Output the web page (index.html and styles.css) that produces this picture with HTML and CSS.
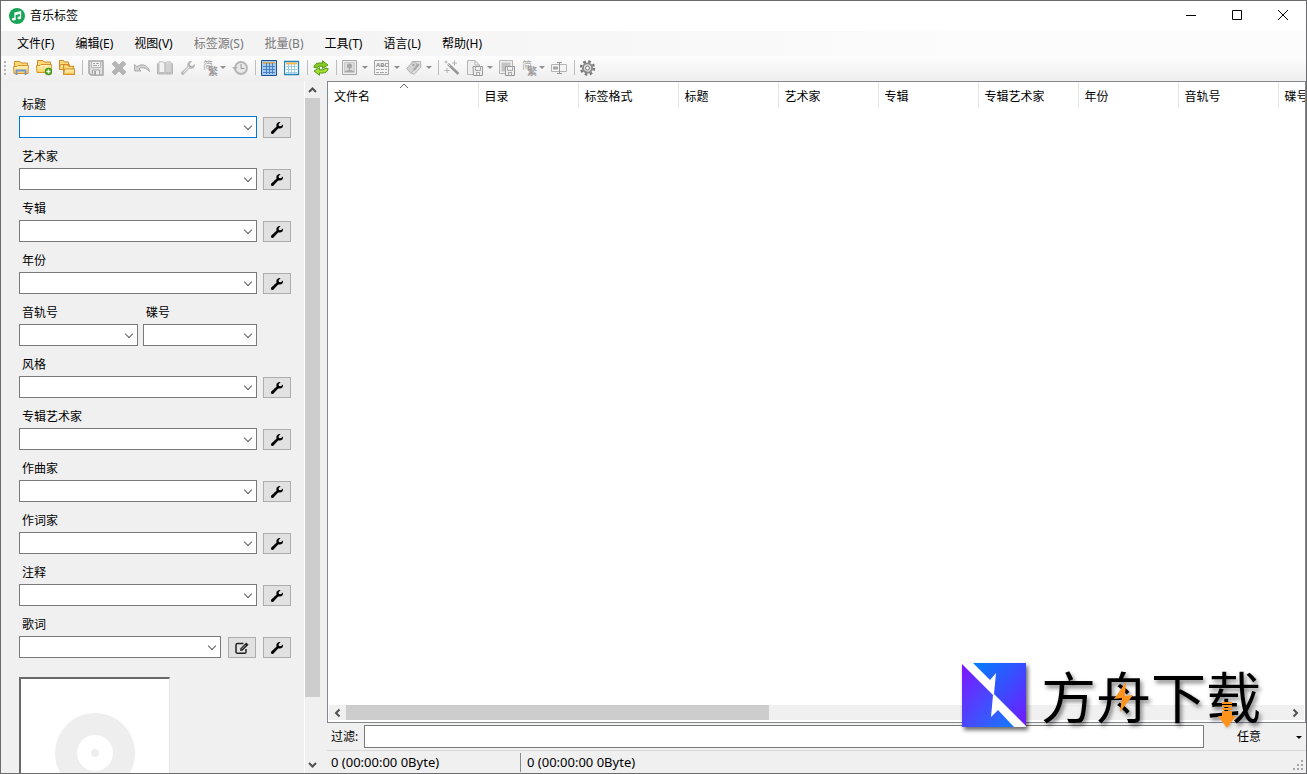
FILE: index.html
```html
<!DOCTYPE html>
<html lang="zh-CN">
<head>
<meta charset="utf-8">
<title>音乐标签</title>
<link rel="stylesheet" href="styles.css">
</head>
<body>
<svg class="defs" aria-hidden="true">
  <defs>
    <linearGradient id="gold" x1="0" y1="0" x2="0" y2="1"><stop offset="0" stop-color="#fff3c0"/><stop offset="1" stop-color="#fbcf5e"/></linearGradient>
    <symbol id="wrench" viewBox="0 0 14 14"><path d="M13 3.4 10.8 5.2 8.9 4.9 8.6 3.2 10.6 1.1C8.5.5 6.5 1.9 6.4 4.1L6.6 5.6 1.3 10.6C.1 12 1.8 13.8 3.3 12.7L8.2 7.4C11.500 8.300 13.500 6 13 3.400Z" fill="currentColor"/></symbol>
    <symbol id="folder" viewBox="0 0 16 16"><path d="M1.500 1.500H7L8 3H14.500V13.500H1.500Z" fill="#fbd977" stroke="#cf8a2a"/><path d="M.5 6.500H4L5 5.500H15.500L15 13.500H1Z" fill="url(#gold)" stroke="#d6922f"/></symbol>
    <symbol id="folder-small" viewBox="0 0 11 10"><path d="M.5 9.500V.5H4.500L5.500 2H9.500V9.500Z" fill="#fbd977" stroke="#cf8a2a"/><path d="M.5 9.500 1.500 4.500H10.500V9.500Z" fill="url(#gold)" stroke="#d6922f"/></symbol>
    <symbol id="convert" viewBox="0 0 16 16"><text x="0" y="9" font-size="10" fill="#999">简</text><text x="5" y="15" font-size="10" font-weight="700" fill="#8c8c8c">繁</text></symbol>
    <symbol id="floppy" viewBox="0 0 16 16"><path d="M1 1H15V15H3L1 13Z" fill="#dcdcdc" stroke="#999" stroke-width="1.500"/><path d="M3.500 1.500H12.500V7.500H3.500Z" fill="#f4f4f4" stroke="#aaa"/><path d="M5 3.500H7M8 3.500H11M5 5.500H9M10 5.500H11" stroke="#999"/><path d="M4.500 10H11.500V15H4.500Z" fill="#eee" stroke="#999"/><path d="M6 11H8V15H6Z" fill="#999"/></symbol>
  </defs>
</svg>
<div class="window">
  <header class="titlebar">
    <svg class="app-icon" viewBox="0 0 16 16"><circle cx="8" cy="8" r="8" fill="#18a558"/><path d="M6 11V5L11.500 3.700V9.700M6 6.500 11.500 5.200" fill="none" stroke="#fff" stroke-width="1.300"/><ellipse cx="4.800" cy="11.200" rx="1.800" ry="1.400" fill="#fff"/><ellipse cx="10.300" cy="9.900" rx="1.800" ry="1.400" fill="#fff"/></svg>
    <h1 class="app-name">音乐标签</h1>
    <button class="caption" aria-label="最小化"><svg viewBox="0 0 12 12"><path d="M1 5.500H11" stroke="#000"/></svg></button>
    <button class="caption" aria-label="最大化"><svg viewBox="0 0 12 12"><path d="M1.500.5H10.500V9.500H1.500Z" fill="none" stroke="#000"/></svg></button>
    <button class="caption" aria-label="关闭"><svg viewBox="0 0 12 12"><path d="M1 0 11 10M11 0 1 10" stroke="#000"/></svg></button>
  </header>
  <nav class="menubar">
    <button>文件(F)</button><button>编辑(E)</button><button>视图(V)</button><button disabled>标签源(S)</button><button disabled>批量(B)</button><button>工具(T)</button><button>语言(L)</button><button>帮助(H)</button>
  </nav>
  <div class="toolbar">
    <span class="grip"></span>
    <button class="tool" aria-label="打开目录"><svg viewBox="0 0 16 16"><use href="#folder"/><path d="M3.500 15V10.500H12.500V15" fill="none" stroke="#7396cb" stroke-width="1.800"/></svg></button>
    <button class="tool" aria-label="添加目录"><svg viewBox="0 0 16 16"><use href="#folder" y="-1" width="16" height="16"/><circle cx="12.500" cy="11.500" r="3.500" fill="#48a51b" stroke="#30840b" stroke-width=".6"/><path d="M12.500 9.500V13.500M10.500 11.500H14.500" stroke="#fff" stroke-width="1.300"/></svg></button>
    <button class="tool" aria-label="打开文件"><svg viewBox="0 0 16 16"><use href="#folder-small" width="11" height="10"/><use href="#folder-small" x="4" y="4" width="12" height="11"/></svg></button>
    <span class="divider"></span>
    <button class="tool" disabled aria-label="保存"><svg viewBox="0 0 16 16"><use href="#floppy"/></svg></button>
    <button class="tool" disabled aria-label="删除"><svg viewBox="0 0 16 16"><path d="M4 1 8 5 12 1 15 4 11 8 15 12 12 15 8 11 4 15 1 12 5 8 1 4Z" fill="#aaa" stroke="#999" stroke-width=".6"/></svg></button>
    <button class="tool" disabled aria-label="撤销"><svg viewBox="0 0 16 16"><path d="M.5 4.500V11H7L5 8.800C8 6.800 11.500 7.500 15.500 11.500 14.500 5.500 8 2.800 2.900 6.600Z" fill="#ccc" stroke="#999" stroke-width=".9"/></svg></button>
    <button class="tool" disabled aria-label="书籍"><svg viewBox="0 0 16 16"><path d="M.5 3.500V14H15.500V3.500" fill="#c4c4c4" stroke="#aaa"/><path d="M2 2Q6 1 8 3Q10 1 14 2V12.500H9L8 13.500 7 12.500H2Z" fill="#f2f2f2" stroke="#b4b4b4"/><path d="M8.500 3.500Q11 1.500 14 2V12H8.500Z" fill="#ccc"/><path d="M8 3V13" stroke="#999"/></svg></button>
    <button class="tool" disabled aria-label="工具"><svg class="soft-wrench" viewBox="0 0 14 14"><use href="#wrench"/><path d="M3 11 8 6" stroke="#eee"/></svg></button>
    <button class="tool menu" disabled aria-label="简繁转换"><svg viewBox="0 0 16 16"><use href="#convert"/></svg></button>
    <button class="tool" disabled aria-label="历史"><svg viewBox="0 0 16 16"><circle cx="9" cy="8" r="6" fill="#e5e5e5" stroke="#aaa" stroke-width="1.800"/><path d="M9 4V8.500H12.500" fill="none" stroke="#888"/><path d="M0 7H6L3 10.500Z" fill="#aaa"/></svg></button>
    <span class="divider"></span>
    <button class="tool" aria-label="标签面板"><svg viewBox="0 0 16 16"><path d="M.5.5H15.500V15.500H.5Z" fill="#a5cbf0" stroke="#1b5391"/><path d="M2 3H14" stroke="#d1aa69" stroke-width="2"/><path d="M2 6.500H14M2 9.500H14M2 12.500H14M5.500 3V14M8.500 3V14M11.500 3V14" stroke="#4682bf"/></svg></button>
    <button class="tool" aria-label="列表面板"><svg viewBox="0 0 16 16"><path d="M.5 1.500H14.500V14.500H.5Z" fill="#fff" stroke="#1d83b8" stroke-width="1.300"/><path d="M2 3.500H13" stroke="#f4b648" stroke-width="2"/><path d="M2 6.500H13M2 9.500H13M2 12.500H13M4.500 4V14M7.500 4V14M10.500 4V14" stroke="#9ccde4"/></svg></button>
    <span class="divider"></span>
    <button class="tool" aria-label="刷新"><svg viewBox="0 0 16 16"><path d="M.8 7.300Q2 2.500 7 3H9.500V.7L15 5 9.500 8.500V6.300H6Q4.500 6.300 4 8Z" fill="#86ca24" stroke="#4b9411" stroke-width=".9"/><path d="M15.200 8.700Q14 13.500 9 13H6.500V15.300L1 11 6.500 7.500V9.700H10Q11.500 9.700 12 8Z" fill="#a3dc35" stroke="#4b9411" stroke-width=".9"/></svg></button>
    <span class="divider"></span>
    <button class="tool wide menu" disabled aria-label="封面"><svg viewBox="0 0 16 16"><path d="M.5.5H14.500V14.500H.5Z" fill="#eee" stroke="#999"/><path d="M2.500 2.500H12.500V12.500H2.500Z" fill="#d4d4d4" stroke="#c4c4c4"/><circle cx="7.500" cy="6" r="2.500" fill="#999"/><path d="M7 7H8V10L12 11V12H3V11L7 10Z" fill="#999"/></svg></button>
    <button class="tool wide menu" disabled aria-label="文本"><svg viewBox="0 0 16 16"><path d="M.5.5H14.500V14.500H.5Z" fill="#f4f4f4" stroke="#999"/><text x="2" y="7" font-size="6" font-weight="700" fill="#777">ABC</text><path d="M2 9.500H6M7 9.500H10M11 9.500H13M2 12.500H5M6 12.500H10M11 12.500H13" stroke="#999"/></svg></button>
    <button class="tool wide menu" disabled aria-label="标签"><svg viewBox="0 0 16 16"><path d="M6 1.500H14.500L15 7 8 14.500 3 11Z" fill="#ddd" stroke="#aaa"/><path d="M.5 8.500 7 1.500 10.500 3V7L5 13.500Z" fill="#ccc" stroke="#aaa"/><path d="M8 10 13 4" stroke="#999" stroke-width="2"/><circle cx="7.500" cy="5" r="1" fill="#888"/></svg></button>
    <span class="divider"></span>
    <button class="tool" disabled aria-label="自动"><svg viewBox="0 0 16 16"><path d="M4 4 14.500 14" stroke="#888" stroke-width="2.500"/><path d="M4 4 6 6" stroke="#ddd"/><path d="M2 .5V3.500M.5 2H3.500M10.500.5V5.500M8 3H13M3 8V13M.5 10.500H5.500" stroke="#aaa"/></svg></button>
    <button class="tool wide menu" disabled aria-label="另存"><svg viewBox="0 0 16 16"><path d="M.5.500H8L12.500 5V14.500H.5Z" fill="#eee" stroke="#aaa"/><path d="M8 .5V5H12" fill="none" stroke="#aaa"/><path d="M6 6.500H15.500V15.500H6.500Z" fill="#eee" stroke="#888"/><path d="M8.500 6V10.500H13.500V6M9.500 15V12.500H12.500V15" fill="none" stroke="#999"/></svg></button>
    <button class="tool" disabled aria-label="导出封面"><svg viewBox="0 0 16 16"><path d="M.5.500H13.500V13.500H.5Z" fill="#eee" stroke="#aaa"/><path d="M2.500 2.500H11.500V11.500H2.500Z" fill="#bbb"/><path d="M6.500 6.500H15.500V15.500H6.500Z" fill="#eee" stroke="#888"/><path d="M8.500 6V10.500H13.500V6M9.500 15V12.500H12.500V15" fill="none" stroke="#999"/></svg></button>
    <button class="tool menu" disabled aria-label="批量简繁转换"><svg viewBox="0 0 16 16"><use href="#convert"/></svg></button>
    <button class="tool" disabled aria-label="重命名"><svg viewBox="0 0 16 16"><path d="M.5 4.500H15.500V11.500H.5Z" fill="#f4f4f4" stroke="#aaa"/><path d="M2 6.500H7V9.500H2Z" fill="#999"/><path d="M6 2.500H11M6 13.500H11M8.500 3V13" stroke="#888"/></svg></button>
    <span class="divider"></span>
    <button class="tool" aria-label="设置"><svg viewBox="0 0 16 16"><circle cx="7.500" cy="8" r="6.500" fill="none" stroke="#777" stroke-width="2.400" stroke-dasharray="2.550 2.550"/><circle cx="7.500" cy="8" r="4.600" fill="#ddd" stroke="#888" stroke-width="1.800"/><circle cx="7.500" cy="8" r="2" fill="#fff" stroke="#777"/></svg></button>
  </div>
  <main class="main">
    <aside class="side">
      <form class="fields">
        <div class="field"><label for="f1">标题</label><span class="combo active"><select id="f1"></select></span><button type="button" class="edit" aria-label="编辑标题"><svg><use href="#wrench"/></svg></button></div>
        <div class="field"><label for="f2">艺术家</label><span class="combo"><select id="f2"></select></span><button type="button" class="edit" aria-label="编辑艺术家"><svg><use href="#wrench"/></svg></button></div>
        <div class="field"><label for="f3">专辑</label><span class="combo"><select id="f3"></select></span><button type="button" class="edit" aria-label="编辑专辑"><svg><use href="#wrench"/></svg></button></div>
        <div class="field"><label for="f4">年份</label><span class="combo"><select id="f4"></select></span><button type="button" class="edit" aria-label="编辑年份"><svg><use href="#wrench"/></svg></button></div>
        <div class="field pair"><div><label for="f5">音轨号</label><span class="combo"><select id="f5"></select></span></div><div><label for="f6">碟号</label><span class="combo"><select id="f6"></select></span></div></div>
        <div class="field"><label for="f7">风格</label><span class="combo"><select id="f7"></select></span><button type="button" class="edit" aria-label="编辑风格"><svg><use href="#wrench"/></svg></button></div>
        <div class="field"><label for="f8">专辑艺术家</label><span class="combo"><select id="f8"></select></span><button type="button" class="edit" aria-label="编辑专辑艺术家"><svg><use href="#wrench"/></svg></button></div>
        <div class="field"><label for="f9">作曲家</label><span class="combo"><select id="f9"></select></span><button type="button" class="edit" aria-label="编辑作曲家"><svg><use href="#wrench"/></svg></button></div>
        <div class="field"><label for="f10">作词家</label><span class="combo"><select id="f10"></select></span><button type="button" class="edit" aria-label="编辑作词家"><svg><use href="#wrench"/></svg></button></div>
        <div class="field"><label for="f11">注释</label><span class="combo"><select id="f11"></select></span><button type="button" class="edit" aria-label="编辑注释"><svg><use href="#wrench"/></svg></button></div>
        <div class="field lyrics"><label for="f12">歌词</label><span class="combo"><select id="f12"></select></span><button type="button" class="edit" aria-label="歌词编辑器"><svg viewBox="0 0 14 14"><path d="M11 8V11Q11 12.300 9.700 12.300H2.500Q1 12.300 1 11V4Q1 2.500 2.500 2.500H8.500" fill="none" stroke="#222" stroke-width="1.500"/><path d="M5 10 5.500 7.300 11.300 1.500 13.500 3.700 7.700 9.500Z" fill="#222"/><path d="M6.500 8.200 10.500 4.200" stroke="#ddd" stroke-width=".7"/></svg></button><button type="button" class="edit" aria-label="编辑歌词"><svg><use href="#wrench"/></svg></button></div>
      </form>
      <div class="cover"><svg viewBox="0 0 80 80"><circle cx="40" cy="40" r="40" fill="#eee"/><circle cx="40" cy="40" r="18" fill="#fff"/><circle cx="40" cy="40" r="4" fill="#eee"/></svg></div>
    </aside>
    <div class="vscroll"><svg class="arrow" viewBox="0 0 15 17"><path d="M4 11 7.500 7.500 11 11" fill="none" stroke="#505050" stroke-width="2"/></svg><span class="vtrack"><span class="vthumb"></span></span><svg class="arrow" viewBox="0 0 15 17"><path d="M4 7 7.500 10.500 11 7" fill="none" stroke="#505050" stroke-width="2"/></svg></div>
    <section class="content">
      <div class="list">
        <div class="list-view">
          <table>
            <thead><tr><th class="first">文件名<svg class="sort" viewBox="0 0 10 6"><path d="M1 5 5 1 9 5" fill="none" stroke="#666"/></svg></th><th>目录</th><th>标签格式</th><th>标题</th><th>艺术家</th><th>专辑</th><th>专辑艺术家</th><th>年份</th><th>音轨号</th><th>碟号</th></tr></thead>
          </table>
        </div>
        <div class="hscroll"><svg class="arrow" viewBox="0 0 16 16"><path d="M10 4.500 6.500 8 10 11.500" fill="none" stroke="#505050" stroke-width="2"/></svg><span class="htrack"><span class="hthumb"></span></span><svg class="arrow" viewBox="0 0 16 16"><path d="M6 4.500 9.500 8 6 11.500" fill="none" stroke="#505050" stroke-width="2"/></svg></div>
      </div>
      <div class="filter"><label for="filter">过滤:</label><input id="filter" type="text"><span class="scope"><select aria-label="过滤范围"><option>任意</option></select></span></div>
      <footer class="status"><span class="cell">0 (00:00:00 0Byte)</span><span>0 (00:00:00 0Byte)</span><svg class="size-grip" viewBox="0 0 12 12"><path d="M8 0h2v2H8zM4 4h2v2H4zM8 4h2v2H8zM0 8h2v2H0zM4 8h2v2H4zM8 8h2v2H8z" fill="#a5a5a5"/></svg></footer>
    </section>
  </main>
</div>
<svg class="brand" viewBox="0 0 310 78" role="img" aria-label="方舟下载">
  <defs>
    <linearGradient id="upper" x1="0" y1="0" x2="1" y2="1"><stop offset="0" stop-color="#0080ff"/><stop offset="1" stop-color="#7418ff"/></linearGradient>
    <linearGradient id="lower" x1="0" y1="0" x2="1" y2="1"><stop offset="0" stop-color="#8014ff"/><stop offset="1" stop-color="#147aff"/></linearGradient>
  </defs>
  <g transform="translate(2 3)"><g class="shade"><path d="M0 0H64V64H0Z" fill="#fff"/><path d="M11 0H64V63L32 31 34 10 28 17Z" fill="url(#upper)"/><path d="M0 1 31 32 29 54 36 47 52 64H0Z" fill="url(#lower)"/></g></g>
  <text class="brand-text" x="81" y="58">方舟下载</text>
  <path d="M166 22 154 39 162 38 160 52 173 35 165 36Z" fill="#ff931e"/>
  <path d="M262 42H272V44H262ZM262 45H272V47H262ZM262 48H272V50H262ZM262 51H272V56H276L267 68 258 56H262Z" fill="#ff931e"/>
</svg>
</body>
</html>
```
FILE: styles.css
```css
* { box-sizing: border-box; }
body {
  margin: 0;
  font: 12px/16px "Noto Sans", "Noto Sans CJK SC", sans-serif;
  color: #000;
  background: #f0f0f0;
}
button, select, input { font: inherit; color: inherit; margin: 0; }
button { border: 0; padding: 0; background: none; }
svg { display: block; }
.defs { position: absolute; width: 0; height: 0; }

.window {
  display: flex;
  flex-direction: column;
  height: 100vh;
  border: 1px solid #6b6b6d;
  overflow: hidden;
}
.titlebar {
  display: flex;
  align-items: center;
  flex: 0 0 30px;
  padding-left: 8px;
  background: #fff;
}
.app-icon { width: 16px; height: 16px; }
.app-name { flex: 1; margin: 0 0 0 5px; font-size: 12px; font-weight: 400; }
.caption { display: grid; place-items: center; width: 46px; height: 30px; }
.caption svg { width: 12px; height: 12px; }

.menubar {
  display: flex;
  flex: 0 0 25px;
  gap: 21px;
  padding-left: 16px;
  background: linear-gradient(90deg, #f0f0f0, #fcfcfc 75%);
}
.menubar button:disabled { color: #777; }

.toolbar {
  display: flex;
  align-items: center;
  flex: 0 0 25px;
  padding-bottom: 2px;
  background: linear-gradient(#fdfdfd, #eee);
}
.grip {
  width: 2px;
  height: 14px;
  margin: 0 4px 0 3px;
  background: repeating-linear-gradient(#b4b4b4 0 2px, transparent 2px 4px);
}
.tool { display: flex; align-items: center; width: 23px; height: 23px; padding-left: 3px; }
.tool svg { flex: none; width: 16px; height: 16px; }
.tool:disabled svg { opacity: .85; }
.tool .soft-wrench { color: #aaa; }
.tool.menu { width: 29px; }
.tool.wide { width: 32px; }
.tool.menu::after {
  content: "";
  margin-left: 1px;
  border: 3px solid transparent;
  border-top-color: #909090;
  border-bottom: 0;
}
.tool.wide::after { margin-left: 4px; }
.divider { width: 1px; height: 15px; margin: 0 2px 0 3px; background: #bdbdbd; }

.main { display: flex; flex: 1; min-height: 0; }
.side { flex: 0 0 303px; padding: 11px 13px 0 18px; overflow: hidden; }
.fields { display: grid; gap: 6px; }
.field {
  display: grid;
  grid-template-columns: 1fr 28px;
  column-gap: 6px;
  align-items: end;
}
.field.lyrics { grid-template-columns: 1fr 28px 28px; column-gap: 7px; }
.field label { display: block; grid-column: 1 / -1; height: 24px; padding-left: 3px; line-height: 26px; }
.field.pair { grid-template-columns: 119px 114px; column-gap: 5px; }
.combo { position: relative; display: block; height: 22px; }
.combo select {
  display: block;
  width: 100%;
  height: 100%;
  appearance: none;
  border: 1px solid #7a7a7a;
  border-radius: 0;
  background: #fff;
}
.combo.active select { border-color: #0078d7; }
.combo::after {
  content: "";
  position: absolute;
  top: 7px;
  right: 6px;
  width: 6px;
  height: 6px;
  border: solid #606060;
  border-width: 0 1px 1px 0;
  transform: rotate(45deg);
}
.edit { display: grid; place-items: center; height: 21px; border: 1px solid #adadad; background: #e1e1e1; }
.edit svg { width: 14px; height: 14px; }
.cover {
  width: 151px;
  height: 151px;
  margin-top: 19px;
  padding: 34px;
  border: solid #696969;
  border-width: 2px 1px 1px 2px;
  border-right-color: #e3e3e3;
  background: #fff;
}
.cover svg { width: 80px; height: 80px; }

.combo::after, .edit svg, .cover svg { box-sizing: border-box; }

.vscroll { display: flex; flex-direction: column; flex: 0 0 16px; margin-right: 7px; border-left: 1px solid #fff; }
.arrow { flex: none; width: 15px; height: 17px; }
.vtrack { flex: 1; }
.vthumb { display: block; height: 91%; background: #cdcdcd; }

.content { display: flex; flex-direction: column; flex: 1; min-width: 0; }
.list { display: flex; flex-direction: column; flex: 1; min-height: 0; border: 1px solid #828790; background: #fff; }
.list-view { flex: 1; overflow: hidden; }
table { width: 1050px; border-collapse: collapse; table-layout: fixed; }
th {
  position: relative;
  width: 100px;
  height: 26px;
  padding: 4px 0 0 6px;
  border-right: 1px solid #e5e5e5;
  font-weight: 400;
  text-align: left;
  white-space: nowrap;
}
th.first { width: 150px; }
.sort { position: absolute; top: 1px; left: 71px; width: 10px; height: 6px; }
.hscroll { display: flex; align-items: center; height: 15px; margin: 0 1px 2px; background: #f0f0f0; }
.hscroll .arrow { width: 17px; height: 16px; }
.htrack { flex: 1; height: 15px; }
.hthumb { display: block; width: 45%; height: 15px; background: #cdcdcd; }

.filter { display: flex; align-items: center; flex: 0 0 28px; border-bottom: 1px solid #d7d7d7; }
.filter label { width: 37px; padding-left: 4px; }
.filter input { flex: 1; min-width: 0; height: 23px; border: 1px solid #7a7a7a; background: #fff; }
.scope { position: relative; flex: 0 0 102px; }
.scope select { width: 100%; padding: 0 0 0 33px; appearance: none; border: 0; background: none; }
.scope::after {
  content: "";
  position: absolute;
  top: 7px;
  right: 4px;
  border: 3px solid transparent;
  border-top-color: #000;
  border-bottom: 0;
}
.status { display: flex; align-items: center; flex: 0 0 22px; gap: 6px; padding-left: 4px; font-size: 13px; }
.status .cell { width: 190px; height: 19px; border-right: 1px solid #8c8c8c; line-height: 19px; }
.size-grip { align-self: flex-end; width: 12px; height: 12px; margin: 0 1px 1px auto; }

.brand { position: fixed; right: 37px; bottom: 36px; width: 310px; height: 78px; overflow: visible; pointer-events: none; }
.brand-text { font: 400 55px "Noto Sans CJK SC", sans-serif; filter: drop-shadow(2px 3px 2px rgba(0, 0, 0, .5)); }
.shade { filter: drop-shadow(2px 3px 2px rgba(0, 0, 0, .6)); }
```
